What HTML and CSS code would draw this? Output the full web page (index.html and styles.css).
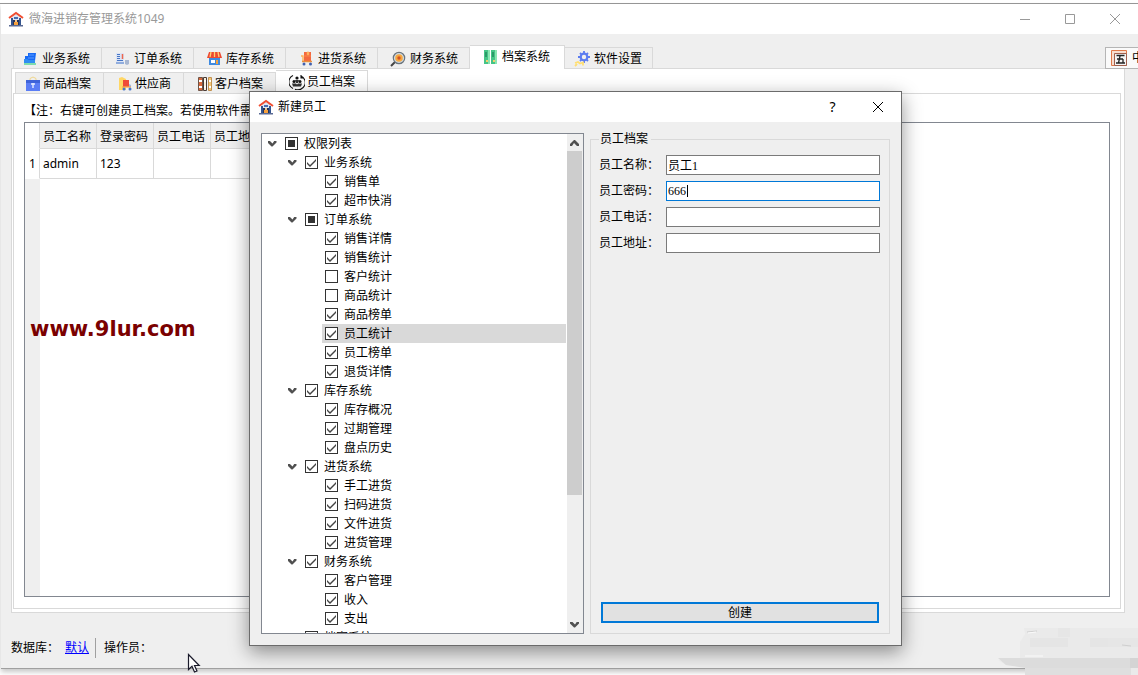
FILE: index.html
```html
<!DOCTYPE html>
<html lang="zh-CN">
<head>
<meta charset="utf-8">
<title>微海进销存管理系统1049</title>
<link rel="stylesheet" href="styles.css">
</head>
<body>
<svg class="defs" aria-hidden="true">
  <symbol id="house" viewBox="0 0 16 16"><path d="M3 7l5-4 5 4v7H3z" fill="#dfe6f2"/><path d="M3 7h2v7H3zM11 7h2v7h-2z" fill="#35558f"/><path d="M1 7l7-5 7 5" fill="none" stroke="#f04e32" stroke-width="2"/><path d="M6 6h4v2H6z" fill="#4a6db0"/><path d="M5 9h6v5H5z" fill="#26345c"/><path d="M6 11h4v3H6z" fill="#f7a13d"/><path d="M7 9h2v2H7z" fill="#f5c58a"/><path d="M1 14h14v1.500H1z" fill="#5a6a94"/></symbol>
</svg>
<div class="backdrop"></div>
<main class="window">
  <header class="titlebar">
    <svg class="icon"><use href="#house"/></svg>
    <h1 class="title">微海进销存管理系统1049</h1>
    <div class="controls">
      <button class="ctl" aria-label="最小化"><svg viewBox="0 0 12 12"><path d="M1 6.500h10"/></svg></button>
      <button class="ctl" aria-label="最大化"><svg viewBox="0 0 12 12"><path d="M1.500 1.500h9v9h-9z"/></svg></button>
      <button class="ctl" aria-label="关闭"><svg viewBox="0 0 12 12"><path d="M1 1l10 10M11 1L1 11"/></svg></button>
    </div>
  </header>
  <div class="content">
    <nav class="tabs">
      <button class="tab"><svg class="icon" viewBox="0 0 16 16"><path d="M6 2h8l-1 8H3V5h3z" fill="#1769f5"/><path d="M7 4h5M6 7h6" stroke="#5a9cff"/><path d="M2 8h3l2 1h6v3H2z" fill="#2f8df2"/><path d="M2 12h12v2H2z" fill="#7fdcae"/></svg>业务系统</button>
      <button class="tab"><svg class="icon" viewBox="0 0 16 16"><path d="M2 2h8v11H2z" fill="#dbe4f6"/><path d="M3 3.500h3M3 5.500h3M3 7.500h3M3 9.500h6M2 12h8" stroke="#4776c5"/><path d="M8.500 3v5" stroke="#ee684c" stroke-width="1.500"/><path d="M11 9h4v4l-2 1-2-1z" fill="#a8b7d2"/></svg>订单系统</button>
      <button class="tab"><svg class="icon" viewBox="0 0 16 16"><path d="M3 7h11v7H3z" fill="#3f8ae0"/><path d="M5 9h4v3H5z" fill="#fff"/><path d="M10 9h2v4h-2z" fill="#f3a13d"/><path d="M3 1h11l2 6H1z" fill="#ed4931"/><path d="M5 1L4 6M8.500 1v5M12 1l1 5" stroke="#ffd070" stroke-width="1.300"/></svg>库存系统</button>
      <button class="tab"><svg class="icon" viewBox="0 0 16 16"><path d="M6 1h7v9H6z" fill="#f4683e"/><path d="M9 1h2v3H9zM6 5h7" fill="#ffc164" stroke="#ff9a56" stroke-width=".6"/><path d="M3 5h2v6" fill="none" stroke="#ffb056" stroke-width="1.400"/><path d="M4 10.500h10" stroke="#e88e3c" stroke-width="1.500"/><circle cx="6" cy="13" r="1.500" fill="#4061b0"/><circle cx="12.500" cy="13" r="1.500" fill="#4061b0"/></svg>进货系统</button>
      <button class="tab"><svg class="icon" viewBox="0 0 16 16"><path d="M1 15l4-4" stroke="#444" stroke-width="2"/><circle cx="9" cy="7" r="5.700" fill="#cfd9e0" stroke="#6a747c" stroke-width="1.200"/><circle cx="9" cy="7" r="3.800" fill="#f6a840"/><circle cx="9" cy="7" r="1.700" fill="#d65322"/></svg>财务系统</button>
      <button class="tab active"><svg class="icon" viewBox="0 0 16 16"><path d="M2 1h6v14H2zM9 1h6v14H9z" fill="#45c486"/><path d="M7 1v14M14 1v14" stroke="#8be5b2" stroke-width="2"/><path d="M4 3v5M11 3v5" stroke="#2a9a68" stroke-width="2"/><path d="M4 12h2M11 12h2" stroke="#f2d06b" stroke-width="2"/></svg>档案系统</button>
      <button class="tab last"><svg class="icon" viewBox="0 0 16 16"><circle cx="10" cy="6" r="3.300" fill="none" stroke="#5b7cf0" stroke-width="2.200"/><path d="M10 0v2M10 10v2M4 6h2M14 6h2M6 2l1.500 1.500M12.500 8.500L14 10M14 2l-1.500 1.500M7.500 8.500L6 10" stroke="#5b7cf0" stroke-width="1.800"/><path d="M1 12l3-1 2 1.500 3-1v3M1 15l2-2" stroke="#ffdf73" stroke-width="1.800" fill="none"/></svg>软件设置</button>
    </nav>
    <section class="pane">
      <nav class="tabs inner">
        <button class="tab"><svg class="icon" viewBox="0 0 16 16"><path d="M5 4V2.500L8 1l3 1.500V4" fill="none" stroke="#f0d68a"/><path d="M1 4h14v11H1z" fill="#5b7df5"/><path d="M1 4h14v3H1z" fill="#3f63d8"/><path d="M6 8h4M8 7v5" stroke="#e5ecff" stroke-width="1.400"/></svg>商品档案</button>
        <button class="tab"><svg class="icon" viewBox="0 0 16 16"><path d="M2 2l3-1 4 2v11H2z" fill="#ffd766"/><path d="M6 4h6v7H6z" fill="#ef4a38"/><path d="M12 8l2 1v2h-2z" fill="#9fb6e4"/><path d="M5 11h9" stroke="#f7a74b" stroke-width="1.300"/><circle cx="7" cy="13" r="1.500" fill="#4877cb"/><circle cx="13" cy="13" r="1.500" fill="#4877cb"/></svg>供应商</button>
        <button class="tab"><svg class="icon" viewBox="0 0 16 16"><path d="M1.500 1.500h4v13h-4z" fill="#d9693c" stroke="#6e5548"/><path d="M6.500 1.500h3v13h-3z" fill="#f8f0df" stroke="#493b35"/><path d="M11.500 1.500h3v13h-3z" fill="#f4c777" stroke="#c09050"/><path d="M2 5h3M7 5h2M12 5h2M2 11h3M7 11h2M12 11h2" stroke="#fff" stroke-width="2"/></svg>客户档案</button>
        <button class="tab active"><svg class="icon" viewBox="0 0 16 16"><path d="M4 1.500a7.200 7.200 0 0 0 0 13M6 15.200a7.200 7.200 0 0 0 6-13.200M12 1v3h3" fill="none" stroke="#111" stroke-width="1.100"/><circle cx="8" cy="4" r="1.600" fill="#111"/><circle cx="5" cy="7.500" r="1.500" fill="#111"/><circle cx="11" cy="7.500" r="1.500" fill="#111"/><path d="M6 6h4l-1 3H7zM3 9.500h4l1 1 1-1h4l-1 3H4z" fill="#333"/></svg>员工档案</button>
      </nav>
      <div class="page">
        <p class="note">【注：右键可创建员工档案。若使用软件需</p>
        <div class="sheet">
          <table class="grid">
            <thead><tr><th class="rownum"></th><th>员工名称</th><th>登录密码</th><th>员工电话</th><th>员工地址</th></tr></thead>
            <tbody><tr><th class="rownum" scope="row">1</th><td>admin</td><td>123</td><td></td><td></td></tr></tbody>
          </table>
        </div>
      </div>
    </section>
  </div>
  <footer class="status"><span>数据库：</span><a class="link" href="#">默认</a><span class="operator">操作员：</span></footer>
</main>

<div class="watermark">www.9lur.com</div>

<div class="ime">
  <svg class="icon" viewBox="0 0 16 16"><path d="M.5.5h15v15H.5z" fill="#f8ded0" stroke="#e07848"/><path d="M3.500 3.500h12v12h-12z" fill="#f4f4f4" stroke="#a0604e"/><path d="M5.500 5.500h8M6 9h6M5 13h9M9 6l-1.500 7M12 9v4" stroke="#222" stroke-width="1.300"/></svg>
  <span>中</span>
</div>

<svg class="smudge" viewBox="0 0 140 55" aria-hidden="true">
  <path d="M26 8h114v47H27v-8L8 45 0 40l22-1v-17l5-8z" fill="#eaeaea"/>
  <path d="M32 18h38v9H32zM92 18h18v9H92z" fill="#e5e5e5"/><path d="M110 18h30v9h-30zM60 8h12v9H60z" fill="#e6e6e6"/>
  <path d="M0 38h140v10H28L8 45z" fill="#dcdcdc"/><path d="M132 38h8v10h-8z" fill="#d4d4d4"/><path d="M27 48h106v7H27z" fill="#dfdfdf"/>
  <path d="M29 12l10-1M124 25l9 1" stroke="#cfcfcf"/><path d="M30 13l8-1M27 36h18" stroke="#fafafa"/>
</svg>

<section class="dialog" role="dialog" aria-labelledby="dialog-title">
  <header class="titlebar dialog-bar">
    <svg class="icon"><use href="#house"/></svg>
    <h2 class="title" id="dialog-title">新建员工</h2>
    <div class="controls">
      <button class="ctl help" aria-label="帮助">?</button>
      <button class="ctl" aria-label="关闭"><svg viewBox="0 0 12 12"><path d="M1 1l10 10M11 1L1 11"/></svg></button>
    </div>
  </header>
  <div class="dialog-body">
    <div class="tree-box">
      <ul class="tree">
        <li><div class="row"><button class="fold" aria-label="折叠"></button><label><input type="checkbox" class="partial">权限列表</label></div>
          <ul>
            <li><div class="row"><button class="fold" aria-label="折叠"></button><label><input type="checkbox" checked>业务系统</label></div>
              <ul>
                <li class="row"><label><input type="checkbox" checked>销售单</label></li>
                <li class="row"><label><input type="checkbox" checked>超市快消</label></li>
              </ul></li>
            <li><div class="row"><button class="fold" aria-label="折叠"></button><label><input type="checkbox" class="partial">订单系统</label></div>
              <ul>
                <li class="row"><label><input type="checkbox" checked>销售详情</label></li>
                <li class="row"><label><input type="checkbox" checked>销售统计</label></li>
                <li class="row"><label><input type="checkbox">客户统计</label></li>
                <li class="row"><label><input type="checkbox">商品统计</label></li>
                <li class="row"><label><input type="checkbox" checked>商品榜单</label></li>
                <li class="row selected"><label><input type="checkbox" checked>员工统计</label></li>
                <li class="row"><label><input type="checkbox" checked>员工榜单</label></li>
                <li class="row"><label><input type="checkbox" checked>退货详情</label></li>
              </ul></li>
            <li><div class="row"><button class="fold" aria-label="折叠"></button><label><input type="checkbox" checked>库存系统</label></div>
              <ul>
                <li class="row"><label><input type="checkbox" checked>库存概况</label></li>
                <li class="row"><label><input type="checkbox" checked>过期管理</label></li>
                <li class="row"><label><input type="checkbox" checked>盘点历史</label></li>
              </ul></li>
            <li><div class="row"><button class="fold" aria-label="折叠"></button><label><input type="checkbox" checked>进货系统</label></div>
              <ul>
                <li class="row"><label><input type="checkbox" checked>手工进货</label></li>
                <li class="row"><label><input type="checkbox" checked>扫码进货</label></li>
                <li class="row"><label><input type="checkbox" checked>文件进货</label></li>
                <li class="row"><label><input type="checkbox" checked>进货管理</label></li>
              </ul></li>
            <li><div class="row"><button class="fold" aria-label="折叠"></button><label><input type="checkbox" checked>财务系统</label></div>
              <ul>
                <li class="row"><label><input type="checkbox" checked>客户管理</label></li>
                <li class="row"><label><input type="checkbox" checked>收入</label></li>
                <li class="row"><label><input type="checkbox" checked>支出</label></li>
              </ul></li>
            <li><div class="row"><button class="fold" aria-label="折叠"></button><label><input type="checkbox" checked>档案系统</label></div></li>
          </ul></li>
      </ul>
      <div class="scrollbar">
        <button class="fold up" aria-label="向上滚动"></button>
        <div class="track"><div class="thumb"></div></div>
        <button class="fold" aria-label="向下滚动"></button>
      </div>
    </div>
    <fieldset class="group">
      <legend>员工档案</legend>
      <div class="fields">
        <label for="name">员工名称：</label><input class="text" id="name" type="text" value="员工1">
        <label for="pass">员工密码：</label><div class="text focused"><input id="pass" type="text" value="666" size="3"><i class="caret"></i></div>
        <label for="phone">员工电话：</label><input class="text" id="phone" type="text">
        <label for="addr">员工地址：</label><input class="text" id="addr" type="text">
      </div>
      <button class="create">创建</button>
    </fieldset>
  </div>
</section>

<svg class="cursor" viewBox="0 0 14 21" aria-hidden="true"><path d="M1.500 1.500v15l3.500-3.300 2.500 5.800 2.500-1-2.500-5.500h4.700z" fill="#fff" stroke="#1b1b2b" stroke-width="1.200"/></svg>
</body>
</html>
```

FILE: styles.css
```css
* { box-sizing: border-box; }

body {
  margin: 0;
  min-height: 100vh;
  display: flex;
  flex-direction: column;
  position: relative;
  overflow: hidden;
  background: #fff;
  color: #000;
  font: 12px/16px "Noto Sans", "Noto Sans CJK SC", sans-serif;
}

button, input { font: inherit; color: inherit; margin: 0; padding: 0; border-radius: 0; }
button { border: 0; background: none; }
ul { list-style: none; margin: 0; padding: 0; }
.defs { position: absolute; width: 0; height: 0; }
.icon { width: 16px; height: 16px; flex: none; }

/* main window */
.backdrop {
  height: 4px;
  border-bottom: 1px solid #999;
}
.window {
  flex: 1;
  display: flex;
  flex-direction: column;
  margin: 0 0 6px 1px;
  background: #efefef;
  border-bottom: 1px solid #a0a0a0;
  box-shadow: 0 3px 5px rgba(0, 0, 0, .22);
}
.titlebar {
  display: flex;
  align-items: center;
  height: 30px;
  padding-left: 7px;
  background: #fff;
}
.title { margin: 0 0 0 5px; font-size: 12px; font-weight: 400; color: #999; }
.controls { margin-left: auto; display: flex; padding-right: 1px; }
.ctl { width: 45px; height: 28px; display: flex; align-items: center; justify-content: center; }
.ctl svg { width: 12px; height: 12px; fill: none; stroke: #999; }
.content {
  flex: 1;
  display: flex;
  flex-direction: column;
  padding: 11px 13px 0 10px;
}

/* tabs */
.tabs { display: flex; align-items: flex-end; height: 23px; padding-left: 2px; }
.tab {
  display: flex;
  align-items: center;
  gap: 4px;
  height: 21px;
  padding: 1px 11px 0 12px;
  border: 1px solid #d9d9d9;
  border-width: 1px 1px 0 0;
  background: #efefef;
  white-space: nowrap;
}
.tab:first-child { border-left-width: 1px; padding-left: 8px; }
.tab.last { padding-left: 9px; padding-right: 10px; }
.tab.active { height: 24px; margin-bottom: -1px; padding: 0 14px 1px 12px; background: #fff; position: relative; }
.inner .tab { gap: 2px; padding-left: 13px; padding-right: 12px; }
.inner .tab:first-child { padding-left: 9px; }
.inner .tab.active { padding-left: 13px; }
.pane {
  flex: 1;
  display: flex;
  flex-direction: column;
  padding: 1px 3px 3px 1px;
  border: 1px solid #d9d9d9;
  background: #fff;
}
.page {
  flex: 1;
  display: flex;
  flex-direction: column;
  padding: 9px 10px 11px;
  border: 1px solid #d9d9d9;
}
.note { margin: 0 0 3px; white-space: nowrap; }
.sheet {
  flex: 1;
  border: 1px solid #828790;
  background: linear-gradient(90deg, #efefef 15px, #fff 15px);
}
.grid { border-collapse: separate; border-spacing: 0; table-layout: fixed; width: 243px; }
.grid th, .grid td {
  width: 57px;
  height: 30px;
  padding: 0 3px;
  border: 1px solid #d9d9d9;
  border-width: 0 1px 1px 0;
  text-align: left;
  font-weight: 400;
  white-space: nowrap;
  background: #fff;
}
.grid thead th { height: 26px; padding-top: 2px; background: #efefef; }
.grid .rownum, .grid thead .rownum { width: 15px; padding: 0 4px; background: #fff; border-bottom-color: #fff; }

.status { display: flex; align-items: center; height: 55px; padding: 14px 10px 0; }
.link { margin: 0 6px 0 6px; color: #00f; }
.operator { border-left: 1px solid #a0a0a0; padding: 2px 0 2px 8px; }

/* overlays */
.watermark {
  position: absolute;
  left: 30px;
  top: 317px;
  font: bold 21px/24px "DejaVu Sans", sans-serif;
  color: #7a0000;
}
.ime {
  position: absolute;
  right: 0;
  top: 47px;
  width: 33px;
  height: 22px;
  display: flex;
  align-items: center;
  gap: 5px;
  padding-left: 5px;
  overflow: hidden;
  border: 1px solid #b5b5b5;
  border-right: 0;
  background: #fafafa;
}
.smudge { position: absolute; right: 0; bottom: 0; width: 140px; height: 55px; }
.cursor { position: absolute; left: 187px; top: 653px; width: 14px; height: 21px; }

/* dialog */
.dialog {
  position: absolute;
  left: 249px;
  top: 91px;
  width: 653px;
  height: 555px;
  display: flex;
  flex-direction: column;
  border: 1px solid #6b6b6b;
  background: #efefef;
  box-shadow: 0 6px 18px rgba(0, 0, 0, .42);
}
.dialog-bar { flex: none; padding-left: 8px; }
.dialog .title { color: #000; margin-left: 4px; }
.dialog .ctl svg { stroke: #000; }
.help { font-size: 14px; }
.dialog-body {
  flex: 1;
  min-height: 0;
  display: flex;
  gap: 6px;
  padding: 11px;
}
.tree-box {
  flex: none;
  width: 323px;
  display: flex;
  overflow: hidden;
  border: 1px solid #828790;
  background: #fff;
}
.tree { flex: 1; }
.tree ul { padding-left: 20px; }
.tree ul ul { padding-left: 40px; }
.tree ul ul .row { padding-left: 3px; }
.row { display: flex; align-items: center; height: 19px; margin-right: 1px; }
.row label { display: flex; align-items: center; gap: 6px; white-space: nowrap; }
.row .fold { margin-right: 3px; }
.selected { background: #d9d9d9; }
.fold { width: 20px; height: 17px; flex: none; }
.fold::before {
  content: "";
  display: block;
  width: 9px;
  height: 6px;
  margin: 0 auto;
  background: #505050;
  clip-path: polygon(0 0, 2px 0, 5px 3px, 7px 0, 9px 0, 9px 2px, 5px 6px, 4px 6px, 0 2px);
}
.up::before { transform: rotate(180deg); }
.row input {
  appearance: none;
  flex: none;
  width: 13px;
  height: 13px;
  border: 1px solid #333;
  background: #fff;
}
.row input:checked::before {
  content: "";
  display: block;
  height: 11px;
  background: #444;
  clip-path: polygon(1px 5px, 4px 8px, 10px 2px, 10px 4px, 4px 10px, 1px 7px);
}
.row .partial::before {
  content: "";
  display: block;
  margin: 2px;
  height: 7px;
  background: #333;
}
.scrollbar { flex: none; width: 16px; display: flex; flex-direction: column; background: #efefef; }
.scrollbar .fold { width: 15px; }
.track { flex: 1; padding-right: 1px; }
.thumb { height: 74%; background: #cdcdcd; }

.group {
  flex: 1;
  min-width: 0;
  display: flex;
  flex-direction: column;
  justify-content: space-between;
  margin: -2px 0 0;
  padding: 8px 9px 10px 8px;
  border: 1px solid #d9d9d9;
}
.group legend { padding: 0 3px 0 1px; line-height: 16px; }
.fields { display: grid; grid-template-columns: 67px 1fr; row-gap: 6px; align-items: center; }
.text {
  width: 100%;
  height: 20px;
  padding: 0 1px;
  border: 1px solid #7a7a7a;
  background: #fff;
  outline: 0;
  font-family: "Liberation Serif", "Noto Sans CJK SC", serif;
}
.focused { display: flex; align-items: center; border-color: #0078d7; }
.focused input { width: 19px; height: 16px; border: 0; outline: 0; background: none; }
.caret { width: 1px; height: 12px; background: #000; }
.create { height: 21px; margin: 0 1px 0 2px; border: 2px solid #0078d7; background: #e1e1e1; }
```
